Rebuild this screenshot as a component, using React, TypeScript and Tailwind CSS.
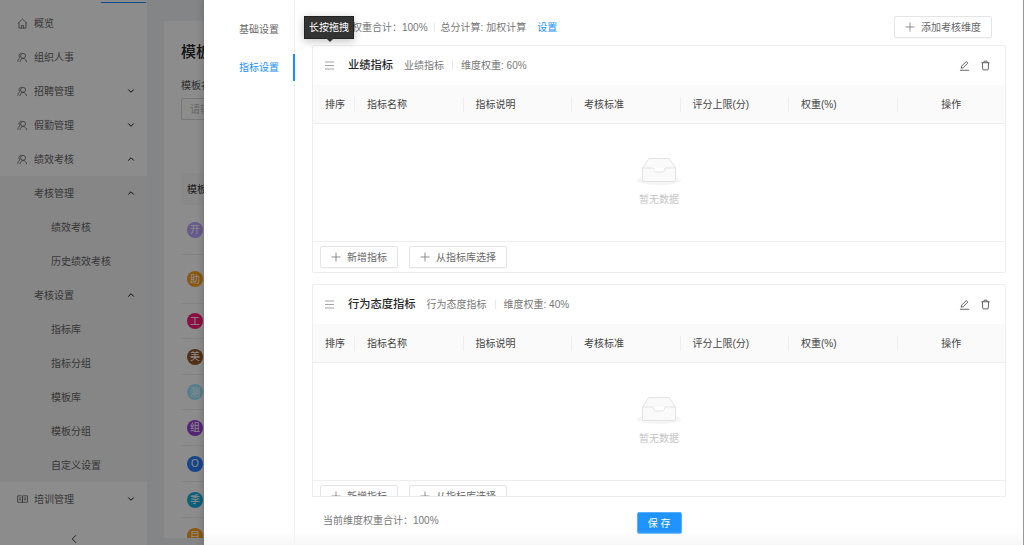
import { ChevronDown, ChevronLeft, ChevronUp, Plus } from 'lucide-react'

const FONT = "font-['Liberation_Sans','Noto_Sans_CJK_SC',sans-serif]"

type NavItem = { label: string; icon?: 'home' | 'users' | 'book'; arrow?: 'up' | 'down'; level: number; sub?: boolean }

const NAV: NavItem[] = [
  { label: '概览', icon: 'home', level: 0 },
  { label: '组织人事', icon: 'users', level: 0 },
  { label: '招聘管理', icon: 'users', arrow: 'down', level: 0 },
  { label: '假勤管理', icon: 'users', arrow: 'down', level: 0 },
  { label: '绩效考核', icon: 'users', arrow: 'up', level: 0 },
  { label: '考核管理', arrow: 'up', level: 1, sub: true },
  { label: '绩效考核', level: 2, sub: true },
  { label: '历史绩效考核', level: 2, sub: true },
  { label: '考核设置', arrow: 'up', level: 1, sub: true },
  { label: '指标库', level: 2, sub: true },
  { label: '指标分组', level: 2, sub: true },
  { label: '模板库', level: 2, sub: true },
  { label: '模板分组', level: 2, sub: true },
  { label: '自定义设置', level: 2, sub: true },
  { label: '培训管理', icon: 'book', arrow: 'down', level: 0 },
]

const AVATARS = [
  { ch: '开', bg: 'bg-[#bca4ff]', h: 'h-[50px]' },
  { ch: '助', bg: 'bg-[#ff9e1c]', h: 'h-[49px]' },
  { ch: '工', bg: 'bg-[#ff1c78]', h: 'h-[35px]' },
  { ch: '美', bg: 'bg-[#94582a]', h: 'h-[36px]' },
  { ch: '测', bg: 'bg-[#9ae8ff]', h: 'h-[35px]' },
  { ch: '组', bg: 'bg-[#9a44d8]', h: 'h-[36px]' },
  { ch: 'O', bg: 'bg-[#2a7fff]', h: 'h-[36px]' },
  { ch: '季', bg: 'bg-[#14b0e0]', h: 'h-[36px]' },
  { ch: '目', bg: 'bg-[#ff9e1c]', h: 'h-[36px]' },
]

const COLUMNS = ['排序', '指标名称', '指标说明', '考核标准', '评分上限(分)', '权重(%)', '操作']

function NavIcon({ type }: { type: NavItem['icon'] }) {
  if (type === 'home') {
    return (
      <svg width="11" height="11" viewBox="0 0 12 12" fill="none" stroke="currentColor" strokeWidth="0.9">
        <path d="M0.8 6 6 1.200 11.200 6M2.200 5v6h7.600V5M4.800 11V8.200h2.400V11" />
      </svg>
    )
  }
  if (type === 'book') {
    return (
      <svg width="11" height="11" viewBox="0 0 12 12" fill="none" stroke="currentColor" strokeWidth="0.9">
        <path d="M0.600 2h4.600c.4 0 .8.300.8.800v7c0-.4-.4-.8-.8-.8H0.600zM11.400 2H6.800c-.4 0-.8.300-.8.800v7c0-.4.400-.8.800-.8h4.600zM2 4.400h2.600M2 6.200h2.600M7.400 4.400H10M7.400 6.200H10" />
      </svg>
    )
  }
  return (
    <svg width="11" height="11" viewBox="0 0 12 12" fill="none" stroke="currentColor" strokeWidth="0.9">
      <circle cx="6.600" cy="4.200" r="2.700" />
      <path d="M3.200 11c.2-2.300 1.500-3.900 3.400-3.900 2 0 3.500 1.600 3.900 3.900M5 1.200C3.400 1.200 2.200 2.500 2.200 4c0 1 .4 1.700 1 2.300-1.400.9-2.200 2.400-2.400 4.400" />
    </svg>
  )
}

function Sidebar() {
  return (
    <aside className="w-[147px] shrink-0 flex flex-col pt-[6px] bg-white text-[#666]">
      {NAV.map((item, i) => (
        <div key={i} className={`h-[34px] shrink-0 flex items-center text-[10px] ${item.sub ? 'bg-[#f4f4f4]' : ''}`}>
          <div className={`flex items-center gap-[6px] flex-1 ${item.level === 2 ? 'pl-[51px]' : item.level === 1 ? 'pl-[34px]' : 'pl-[17px]'}`}>
            {item.icon && <NavIcon type={item.icon} />}
            <span>{item.label}</span>
          </div>
          {item.arrow === 'down' && <ChevronDown size={10} strokeWidth={2.200} className="mr-[11px] text-black" />}
          {item.arrow === 'up' && <ChevronUp size={10} strokeWidth={2.200} className="mr-[11px] text-black" />}
        </div>
      ))}
      <div className="flex justify-center pt-[16px]">
        <ChevronLeft size={14} strokeWidth={1.400} className="text-[#111]" />
      </div>
    </aside>
  )
}

function PageBehind() {
  return (
    <main className="flex-1 min-w-0 bg-[#f0f2f5] pt-[21px] pl-[17px] overflow-hidden">
      <div className="bg-white h-[517px] pl-[17px] overflow-hidden">
        <p className="pt-[21px] text-[15px] leading-5 font-medium text-[#222]">模板库</p>
        <p className="mt-[17px] text-[10px] leading-[14px] text-[#555]">模板名称</p>
        <div className="mt-[5px] w-[300px] h-[22px] rounded-[2px] border border-[#d9d9d9] pl-2 flex items-center text-[10px] text-[#bbb]">
          请输入模板名称
        </div>
        <div className="mt-[53px] h-[32px] bg-[#fafafa] pl-[6px] flex items-center text-[10px] text-[#333]">模板名称</div>
        {AVATARS.map((a, i) => (
          <div key={i} className={`${a.h} flex items-center pl-[6px] border-b border-[#eee]`}>
            <span className={`${a.bg} w-4 h-4 rounded-full flex items-center justify-center text-[10px] text-white`}>{a.ch}</span>
          </div>
        ))}
      </div>
    </main>
  )
}

function PencilIcon() {
  return (
    <svg width="11" height="11" viewBox="0 0 12 12" fill="none" stroke="currentColor" strokeWidth="0.9">
      <path d="M1 11.200h10M2.400 8.900l.4-2.100L7.900 1.700l1.700 1.700-5.100 5.100z" />
    </svg>
  )
}

function TrashIcon() {
  return (
    <svg width="11" height="11" viewBox="0 0 12 12" fill="none" stroke="currentColor" strokeWidth="0.9">
      <path d="M1.600 3h8.800M4 3l.5-1.700h3L8 3M2.600 3l.4 7.200c0 .4.300.6.600.6h4.800c.3 0 .6-.2.6-.6L9.400 3" />
    </svg>
  )
}

function GhostButton({ label }: { label: string }) {
  return (
    <button className="h-[22px] pl-[8px] pr-[10px] flex items-center gap-[4px] rounded-[2px] border border-[#e4e4e4] bg-white shadow-[0_1px_1px_rgba(0,0,0,0.03)] text-[10px] text-[#666]">
      <Plus size={14} strokeWidth={1.400} className="text-[#777]" />
      <span>{label}</span>
    </button>
  )
}

function EmptyState() {
  return (
    <div className="flex-1 flex flex-col items-center pt-[33px]">
      <svg width="44" height="28" viewBox="0 0 44 28" fill="none">
        <ellipse cx="22" cy="23.500" rx="22" ry="4.500" fill="#f5f5f5" />
        <path d="M5.500 11 12 1.500h20L38.500 11v12a1.500 1.500 0 0 1-1.500 1.500H7A1.500 1.500 0 0 1 5.500 23z" fill="#fafafa" stroke="#e3e3e3" />
        <path d="M5.500 11H15c1 0 1.500.6 1.500 1.500S17.500 15 18.500 15h7c1 0 2-1.500 2-2.500S28 11 29 11h9.500" fill="#fff" stroke="#e3e3e3" />
      </svg>
      <span className="mt-[8px] text-[10px] leading-[14px] text-[#c4c4c4]">暂无数据</span>
    </div>
  )
}

function DimensionCard({ title, weight }: { title: string; weight: number }) {
  return (
    <section className="shrink-0 h-[228px] flex flex-col border border-[#eee] rounded-[2px] bg-white">
      <header className="h-[39px] shrink-0 flex items-center pl-[12px] pr-[14px]">
        <svg width="9" height="9" viewBox="0 0 9 9" stroke="#999" strokeWidth="0.9" className="mr-[14px]">
          <path d="M0 1h9M0 4.500h9M0 8h9" />
        </svg>
        <h3 className="text-[11.250px] font-medium text-[#262626]">{title}</h3>
        <span className="ml-[11px] text-[10px] text-[#777]">{title}</span>
        <span className="mx-[8px] h-[9px] w-px bg-[#e8e8e8]" />
        <span className="text-[10px] text-[#777]">维度权重: {weight}%</span>
        <div className="ml-auto flex items-center gap-[10px] text-[#444]">
          <PencilIcon />
          <TrashIcon />
        </div>
      </header>
      <div className="h-[39px] shrink-0 grid grid-cols-[41px_repeat(6,1fr)] items-center bg-[#fafafa] border-b border-[#eee] text-[10px] text-[#444]">
        {COLUMNS.map((c, i) => (
          <div
            key={c}
            className={`h-[15px] flex items-center ${i > 0 ? 'border-l border-[#eee]' : ''} ${i === 6 ? 'justify-center' : 'pl-[12px]'}`}
          >
            {c}
          </div>
        ))}
      </div>
      <EmptyState />
      <footer className="h-[31px] shrink-0 flex items-center gap-[11px] pl-[7px] border-t border-[#eee]">
        <GhostButton label="新增指标" />
        <GhostButton label="从指标库选择" />
      </footer>
    </section>
  )
}

function Drawer() {
  return (
    <div className="absolute top-0 bottom-0 left-[204px] right-0 flex bg-white border-r border-[#999] shadow-[-2px_0_6px_rgba(0,0,0,0.15)]">
      <nav className="w-[91px] shrink-0 border-r border-[#f0f0f0] pt-[10px] text-[10px] text-[#666]">
        <div className="h-[38px] flex items-center pl-[35px]">基础设置</div>
        <div className="h-[27px] mt-[6px] flex items-center pl-[35px] text-[#1890ff] border-r-2 border-[#1890ff] -mr-px">指标设置</div>
      </nav>
      <div className="flex-1 min-w-0 flex flex-col pl-[17px] pr-[17px]">
        <div className="h-[45px] shrink-0 flex items-center pr-[14px] pt-[9px] text-[10px] text-[#777]">
          <span>当前维度权重合计：100%</span>
          <span className="mx-[6px] h-[9px] w-px bg-[#e8e8e8]" />
          <span>总分计算: 加权计算</span>
          <span className="ml-[11px] text-[#1890ff]">设置</span>
          <div className="ml-auto">
            <GhostButton label="添加考核维度" />
          </div>
        </div>
        <div className="h-[452px] shrink-0 overflow-hidden flex flex-col gap-[11px] border-b border-[#eee]">
          <DimensionCard title="业绩指标" weight={60} />
          <DimensionCard title="行为态度指标" weight={40} />
        </div>
        <div className="h-[46px] shrink-0 flex items-center pl-[11px] text-[10px] text-[#777]">
          <span>当前维度权重合计：100%</span>
          <button className="ml-[198px] mt-[6px] w-[45px] h-[22px] rounded-[2px] bg-[#1f93ff] border border-[#5aaeff] text-[10px] text-white">保 存</button>
        </div>
      </div>
      {/* tooltip over the drag handle */}
      <div className="absolute left-[100px] top-[16px] w-[50px] h-[23px] bg-[#333] border border-[#222] flex items-center justify-center text-[10px] text-white shadow-[0_2px_8px_rgba(0,0,0,0.25)]">
        长按拖拽
        <span className="absolute left-[21px] -bottom-[4px] w-0 h-0 border-x-[4px] border-x-transparent border-t-[4px] border-t-[#333]" />
      </div>
      <div className="absolute left-0 right-0 bottom-0 h-[14px] pointer-events-none bg-linear-to-b from-transparent to-[#f6f6f6]" />
    </div>
  )
}

export default function App() {
  return (
    <div className={`${FONT} relative w-[1024px] h-[545px] overflow-hidden bg-white`}>
      <div className="flex h-[545px]">
        <Sidebar />
        <PageBehind />
      </div>
      <span className="absolute left-[101px] top-[2px] w-[45px] h-px bg-[#1890ff]" />
      <div className="absolute inset-0 bg-black/45" />
      <Drawer />
    </div>
  )
}
